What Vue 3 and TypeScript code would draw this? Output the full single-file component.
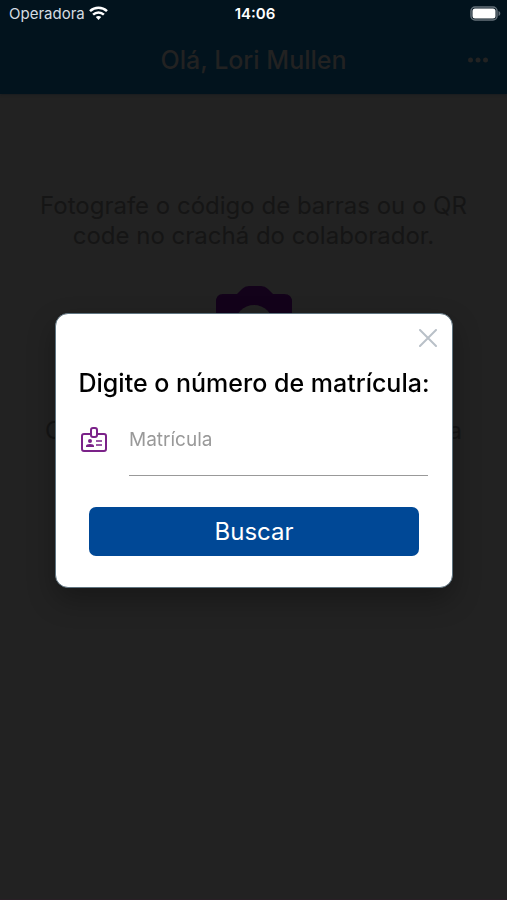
<script setup lang="ts">
import { ref } from 'vue'

const userName = ref('Lori Mullen')
const registration = ref('')
const dialogOpen = ref(true)

function closeDialog(): void {
  dialogOpen.value = false
}

function search(): void {
  registration.value = registration.value.trim()
}
</script>

<template>
  <div class="screen">
    <div class="top">
      <div class="status">
        <div class="carrier">
          <span>Operadora</span>
          <svg width="19" height="15" viewBox="0 0 19 15" fill="none" stroke="#fff" stroke-width="2.5" aria-hidden="true">
            <path d="M1 5.2C5.8.7 13.2.7 18 5.2" />
            <path d="M4.1 8.7c3.1-2.9 7.7-2.9 10.8 0" />
            <path d="M6.8 11.1c1.5-1.4 3.9-1.4 5.4 0L9.5 14z" fill="#fff" stroke="none" />
          </svg>
        </div>
        <time class="clock">14:06</time>
        <svg class="battery" width="31" height="15" viewBox="0 0 31 15" aria-hidden="true">
          <rect x="1" y="1" width="26" height="13" rx="4" fill="none" stroke="#65717a" stroke-width="1.5" />
          <rect x="2.5" y="2.5" width="23" height="10" rx="2.5" fill="#fff" />
          <path d="M28.5 5c2.4.8 2.4 4.2 0 5z" fill="#65717a" />
        </svg>
      </div>
      <header class="bar">
        <h1>Olá, {{ userName }}</h1>
        <button class="more" type="button" aria-label="Mais opções">
          <svg width="20" height="6" viewBox="0 0 20 6" fill="#222" aria-hidden="true">
            <circle cx="2.5" cy="3" r="2.5" />
            <circle cx="10" cy="3" r="2.5" />
            <circle cx="17.5" cy="3" r="2.5" />
          </svg>
        </button>
      </header>
    </div>

    <main class="content">
      <p>Fotografe o código de barras ou o QR code no crachá do colaborador.</p>
      <svg class="camera" width="76" height="68" viewBox="0 0 76 68" aria-hidden="true">
        <path d="M7 8h14l5-5q3-3 7-3h12q4 0 7 3l5 5h11q8 0 8 8v44q0 8-8 8H8q-8 0-8-8V16q0-8 7-8z" fill="#13021a" />
        <circle cx="38" cy="38" r="19" fill="#222" />
        <circle cx="38" cy="38" r="10" fill="#13021a" />
      </svg>
      <p>Ou, se preferir, digite a sua matrícula</p>
    </main>

    <div v-if="dialogOpen" class="overlay">
      <form class="dialog" role="dialog" aria-modal="true" aria-labelledby="dialog-title" @submit.prevent="search">
        <button class="close" type="button" aria-label="Fechar" @click="closeDialog">
          <svg width="18" height="18" viewBox="0 0 18 18" fill="none" stroke="#b9c0c8" stroke-width="2" stroke-linecap="round" aria-hidden="true">
            <path d="M1 1l16 16M17 1L1 17" />
          </svg>
        </button>
        <h2 id="dialog-title">Digite o número de matrícula:</h2>
        <div class="field">
          <label for="registration" aria-label="Matrícula">
            <svg width="26" height="26" viewBox="0 0 26 26" fill="none" stroke="#7b2289" stroke-width="2" stroke-linejoin="round" aria-hidden="true">
              <path d="M10 7H3q-2 0-2 2v13q0 2 2 2h20q2 0 2-2V9q0-2-2-2h-7" />
              <rect x="10" y="1" width="6" height="9" rx="2" />
              <circle cx="9" cy="14" r="2" fill="#7b2289" stroke="none" />
              <path d="M5 20v-1q0-2 4-2t4 2v1z" fill="#7b2289" stroke="none" />
              <path d="M15 14h6M15 18h6" stroke-width="1.5" />
            </svg>
          </label>
          <input id="registration" v-model="registration" type="text" placeholder="Matrícula" />
        </div>
        <button class="submit" type="submit">Buscar</button>
      </form>
    </div>
  </div>
</template>

<style>
body {
  background: #222;
}
</style>

<style scoped>
.screen {
  box-sizing: border-box;
  min-height: 100vh;
  border-bottom: 1px solid #2a1f26;
  background: #222;
  font-family: Inter, "Liberation Sans", sans-serif;
  color: #151515;
}

.top {
  background: #02131d;
  box-shadow: 0 1px 2px #1a1d20;
}

.status {
  display: grid;
  grid-template-columns: 1fr auto 1fr;
  align-items: center;
  height: 27px;
  padding: 0 6px 0 9px;
  color: #fff;
  font-size: 15px;
}

.carrier {
  display: flex;
  align-items: center;
  gap: 4px;
  color: #d5dde2;
}

.clock {
  font-weight: 600;
}

.battery {
  justify-self: end;
}

.bar {
  display: grid;
  grid-template-columns: 1fr auto 1fr;
  align-items: center;
  height: 65px;
  padding: 0 19px 2px;
}

.bar h1 {
  grid-column: 2;
  margin: 0;
  color: #222;
  font-size: 25px;
  font-weight: 500;
  line-height: 32px;
}

button {
  margin: 0;
  padding: 0;
  border: 0;
  background: none;
  font-family: inherit;
  cursor: pointer;
}

.more {
  display: flex;
  justify-self: end;
}

.content {
  display: flex;
  flex-direction: column;
  align-items: center;
  padding: 97px 32px 0;
  text-align: center;
}

.content p {
  margin: 0;
  font-size: 24px;
  line-height: 30px;
}

.camera {
  margin: 35px 0 62px;
}

.overlay {
  position: fixed;
  inset: 0;
  display: flex;
  align-items: center;
  justify-content: center;
  padding: 1px 54px 0 55px;
}

.dialog {
  box-sizing: border-box;
  display: flex;
  flex-direction: column;
  width: 100%;
  padding: 15px 24px 31px;
  border: 1px solid #5f7480;
  border-radius: 13px;
  background: #fff;
  box-shadow: 0 12px 28px rgba(0, 0, 0, 0.3);
}

.close {
  display: flex;
  align-self: flex-end;
  margin-right: -9px;
  padding: 0;
}

.dialog h2 {
  margin: 20px -4px 22px;
  color: #000;
  font-size: 25px;
  font-weight: 500;
  line-height: 32px;
  text-align: center;
  white-space: nowrap;
}

.field {
  display: flex;
  align-items: flex-start;
  gap: 22px;
}

.field label {
  display: flex;
  padding: 6px 0 0 1px;
}

.field input {
  flex: 1;
  min-width: 0;
  box-sizing: border-box;
  height: 55px;
  padding: 0 0 18px;
  border: 0;
  border-bottom: 1px solid #999;
  border-radius: 0;
  outline: none;
  background: transparent;
  color: #111;
  font-family: inherit;
  font-size: 19px;
}

.field input::placeholder {
  color: #999;
  opacity: 1;
}

.submit {
  height: 49px;
  margin: 31px 9px 0;
  border-radius: 7px;
  background: #004896;
  color: #fff;
  font-size: 24px;
}
</style>
